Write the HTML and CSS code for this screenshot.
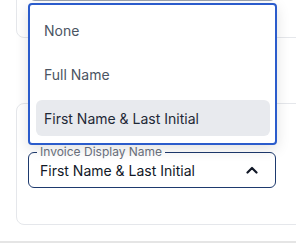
FILE: index.html
```html
<!DOCTYPE html>
<html lang="en">
<head>
  <meta charset="UTF-8" />
  <meta name="viewport" content="width=device-width, initial-scale=1.0"/>
  <title>Invoice Settings</title>
  <link rel="stylesheet" href="styles.css">
</head>
<body>
  <div class="page">
    <div class="card card-top">
      <div class="field field-prev"></div>
    </div>

    <div class="card card-invoice">
      <div class="select-wrap">
        <ul class="menu">
          <li class="menu-item">None</li>
          <li class="menu-item">Full Name</li>
          <li class="menu-item selected">First Name &amp; Last Initial</li>
        </ul>
        <div class="field field-open">
          <span class="field-label">Invoice Display Name</span>
          <span class="field-value">First Name &amp; Last Initial</span>
          <svg class="chevron" width="12" height="8" viewBox="0 0 12 8">
            <path d="M1.5 6.5 L6 2 L10.5 6.5" fill="none" stroke="#111827" stroke-width="2.2" stroke-linecap="round" stroke-linejoin="round"/>
          </svg>
        </div>
      </div>
    </div>
  </div>
  <div class="footer-bar"></div>
</body>
</html>
```

FILE: styles.css
```css
body {
  margin: 0;
  background: #ffffff;
  font-family: 'Inter', 'Noto Sans', sans-serif;
  height: 243px;
  overflow: hidden;
}

.page {
  padding-left: 16px;
  height: 241px;
  overflow: hidden;
}

.card {
  width: 320px;
  box-sizing: border-box;
  border: 1px solid #e5e7eb;
  border-radius: 8px;
  background: #fff;
  padding: 0 12px;
}

.card-top {
  margin-top: -60px;
  height: 98px;
  padding-top: 24px;
}

.field-prev {
  width: 247px;
  height: 36px;
  box-sizing: border-box;
  border: 1px solid #9ca3af;
  border-radius: 6px;
}

.card-invoice {
  margin-top: 65px;
  height: 122px;
  padding-top: 48px;
}

.select-wrap {
  position: relative;
  width: 248px;
  margin-left: -1px;
}

.field {
  box-sizing: border-box;
}

.field-open {
  position: relative;
  height: 36px;
  border: 1px solid #1e3a6e;
  border-radius: 6px;
  display: flex;
  align-items: center;
  padding: 0 17px 0 11px;
}

.field-label {
  position: absolute;
  top: -9px;
  left: 8px;
  padding: 0 3px;
  background: #fff;
  font-size: 12px;
  line-height: 16px;
  color: #6b7280;
}

.field-value {
  flex: 1;
  font-size: 14px;
  color: #111827;
  padding-top: 1px;
}

.chevron {
  display: block;
}

.menu {
  position: absolute;
  left: 0;
  bottom: 43px;
  width: 249px;
  box-sizing: border-box;
  margin: 0;
  list-style: none;
  padding: 7px 5px 7px 6px;
  background: #fff;
  border: 2px solid #2b5ccc;
  border-radius: 4px;
  box-shadow: 0 4px 14px rgba(0, 0, 0, 0.12);
  display: flex;
  flex-direction: column;
  gap: 8px;
  z-index: 10;
}

.menu-item {
  height: 36px;
  display: flex;
  align-items: center;
  padding: 0 8px;
  border-radius: 6px;
  font-size: 14px;
  color: #4b5563;
}

.menu-item.selected {
  background: #e8eaee;
  color: #1f2937;
}

.footer-bar {
  height: 2px;
  background: #e5e5e5;
}
```
